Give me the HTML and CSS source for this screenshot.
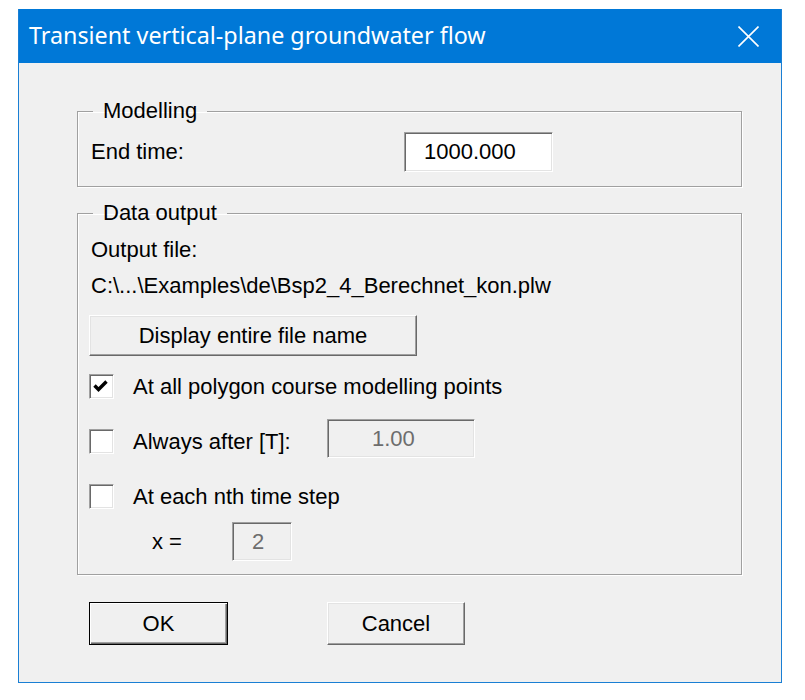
FILE: index.html
```html
<!DOCTYPE html>
<html>
<head>
<meta charset="utf-8">
<link rel="stylesheet" href="styles.css">
</head>
<body>
<div class="window">
  <div class="titlebar">
    <span class="title">Transient vertical-plane groundwater flow</span>
    <svg class="close" width="21" height="21" viewBox="0 0 21 21"><path d="M0.5 0.5 L20.5 20.5 M20.5 0.5 L0.5 20.5" stroke="#fff" stroke-width="1.6" fill="none"/></svg>
  </div>
  <div class="content">
    <fieldset class="group g1">
      <legend>Modelling</legend>
      <div class="row">
        <span class="lbl-end">End time:</span>
        <div class="edit edit-end">1000.000</div>
      </div>
    </fieldset>
    <fieldset class="group g2">
      <legend>Data output</legend>
      <div class="text line1">Output file:</div>
      <div class="text line2">C:\...\Examples\de\Bsp2_4_Berechnet_kon.plw</div>
      <div class="btn btn-display">Display entire file name</div>
      <div class="cbrow r1">
        <span class="cb"><svg width="23" height="23" viewBox="0 0 23 23"><path d="M4.5 10.5 L8.5 14.5 L16.5 6.5" stroke="#000" stroke-width="3.4" fill="none"/></svg></span>
        <span class="cbtext">At all polygon course modelling points</span>
      </div>
      <div class="cbrow r2">
        <span class="cb"></span>
        <span class="cbtext lbl-always">Always after [T]:</span>
        <div class="edit edit-dis edit-t">1.00</div>
      </div>
      <div class="cbrow r3">
        <span class="cb"></span>
        <span class="cbtext">At each nth time step</span>
      </div>
      <div class="xrow">
        <span class="lbl-x">x =</span>
        <div class="edit edit-dis edit-x">2</div>
      </div>
    </fieldset>
    <div class="buttons">
      <div class="btn btn-ok">OK</div>
      <div class="btn btn-cancel">Cancel</div>
    </div>
  </div>
</div>
</body>
</html>
```

FILE: styles.css
```css
html, body {
  margin: 0;
  padding: 0;
  background: #ffffff;
}
body {
  font-family: "Liberation Sans", Arial, sans-serif;
  font-size: 22px;
  color: #000;
}
.window {
  margin: 9px 0 0 18px;
  width: 762px;
  height: 672px;
  border: 1px solid #1a7fd4;
  background: #f0f0f0;
}
.titlebar {
  height: 54px;
  background: #0078d7;
  display: flex;
  align-items: center;
  justify-content: space-between;
  padding: 0 22px 0 10px;
  box-sizing: border-box;
  margin-top: -1px;
}
.title {
  font-family: "Noto Sans", "Open Sans", sans-serif;
  font-size: 23.3px;
  color: #fff;
  margin-bottom: 3px;
}
.close {
  display: block;
}
.content {
  padding: 36px 39px 0 58px;
}
.group {
  margin: 0;
  border: 1px solid #a0a0a0;
  box-shadow: inset 1px 1px 0 #fff, 1px 1px 0 #fff;
  min-width: 0;
}
.group legend {
  padding: 0 10px;
  line-height: 24px;
  height: 24px;
}
.g1 legend { margin-left: 2px; }
.g2 legend { margin-left: 4px; }
.g1 {
  padding: 9px 0 14px 13px;
}
.g2 {
  margin-top: 14px;
  padding: 12px 0 13px 11px;
}
.row {
  display: flex;
  align-items: center;
  height: 40px;
}
.lbl-end {
  width: 313px;
}
.edit {
  box-sizing: border-box;
  height: 40px;
  border: 1px solid;
  border-color: #a0a0a0 #fff #fff #a0a0a0;
  box-shadow: inset 1px 1px 0 #696969, inset -1px -1px 0 #e3e3e3;
  background: #fff;
  display: flex;
  align-items: center;
}
.edit-end {
  width: 149px;
  padding-left: 19px;
}
.edit-dis {
  background: #f0f0f0;
  color: #6d6d6d;
  height: 39px;
}
.text {
  line-height: 25px;
  height: 25px;
  padding-left: 2px;
  white-space: nowrap;
}
.line2 {
  margin-top: 11px;
}
.btn {
  box-sizing: border-box;
  display: flex;
  align-items: center;
  justify-content: center;
  background: #f0f0f0;
  border: 1px solid;
  border-color: #fff #696969 #696969 #fff;
  box-shadow: inset -1px -1px 0 #a0a0a0, inset 1px 1px 0 #e3e3e3;
}
.btn-display {
  margin-top: 17px;
  width: 328px;
  height: 41px;
}
.cbrow {
  display: flex;
  align-items: center;
  height: 25px;
}
.r1 { margin-top: 18px; }
.r2, .r3 { margin-top: 30px; }
.cb {
  box-sizing: border-box;
  width: 25px;
  height: 25px;
  border: 1px solid;
  border-color: #a0a0a0 #fff #fff #a0a0a0;
  box-shadow: inset 1px 1px 0 #696969, inset -1px -1px 0 #e3e3e3;
  background: #fff;
  display: flex;
  align-items: center;
  justify-content: center;
  flex: none;
}
.cb svg { display: block; }
.cbtext {
  margin-left: 19px;
  white-space: nowrap;
}
.lbl-always {
  width: 194px;
}
.edit-t {
  width: 148px;
  padding-left: 44px;
  margin-bottom: 6px;
}
.xrow {
  display: flex;
  align-items: center;
  margin-top: 13px;
  height: 39px;
}
.lbl-x {
  margin-left: 63px;
  width: 80px;
}
.edit-x {
  width: 60px;
  padding-left: 19px;
}
.buttons {
  display: flex;
  margin-top: 27px;
  padding-left: 12px;
}
.btn-ok {
  width: 139px;
  height: 43px;
  border: 1px solid #000;
  box-shadow: inset 1px 1px 0 #fff, inset -1px -1px 0 #696969, inset -2px -2px 0 #a0a0a0;
}
.btn-cancel {
  margin-left: 99px;
  width: 138px;
  height: 43px;
}
```
